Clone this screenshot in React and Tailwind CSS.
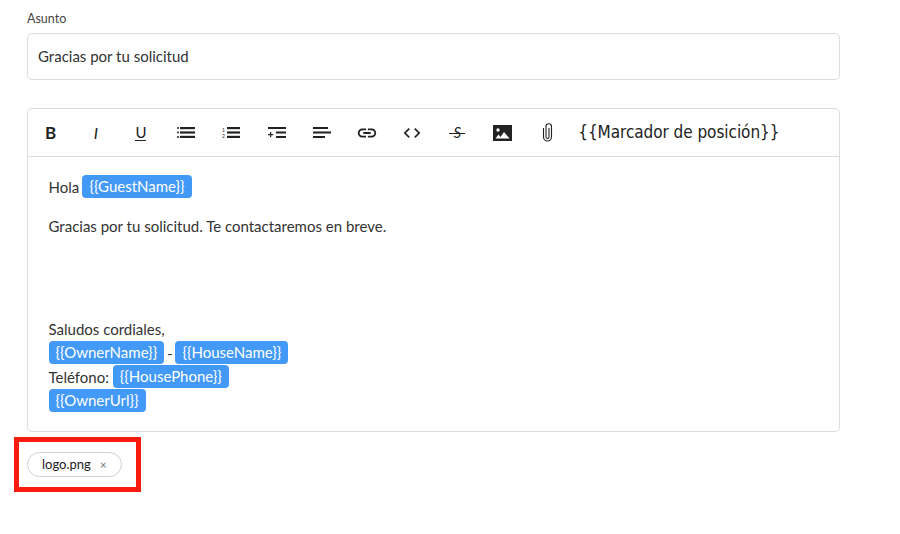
import { MdLink, MdCode } from "react-icons/md";

function Chip({ children }) {
  return (
    <span className="inline-block h-[23px] rounded-[4px] bg-[#4299f7] px-[7px] align-top text-[15px] leading-[23px] text-white">
      {children}
    </span>
  );
}

function Tool({ children }) {
  return <div className="flex w-[45.2px] items-center justify-center text-[#222]">{children}</div>;
}

function Bullets() {
  return (
    <svg width="18" height="11" viewBox="0 0 18 11" fill="#222">
      <rect x="3" y="0" width="15" height="2.200" />
      <rect x="3" y="4.400" width="15" height="2.200" />
      <rect x="3" y="8.800" width="15" height="2.200" />
      <circle cx="1" cy="1.100" r="1" />
      <circle cx="1" cy="5.500" r="1" />
      <circle cx="1" cy="9.900" r="1" />
    </svg>
  );
}

function Numbered() {
  return (
    <svg width="18" height="11" viewBox="0 0 18 11" fill="#222">
      <rect x="5" y="0" width="13" height="2.200" />
      <rect x="5" y="4.400" width="13" height="2.200" />
      <rect x="5" y="8.800" width="13" height="2.200" />
      <text x="0" y="4.500" fontSize="5">1</text>
      <text x="0" y="10.500" fontSize="5">2</text>
    </svg>
  );
}

function Indent() {
  return (
    <svg width="18" height="11" viewBox="0 0 18 11" fill="#222">
      <rect x="0" y="0" width="18" height="2" />
      <rect x="8" y="4.500" width="10" height="2" />
      <rect x="8" y="9" width="10" height="2" />
      <path d="M2 5h1.200v2h2v1.200h-2v2H2v-2H0V7h2z" />
    </svg>
  );
}

function AlignLeft() {
  return (
    <svg width="18" height="11" viewBox="0 0 18 11" fill="#222">
      <rect x="0" y="0" width="15" height="2" />
      <rect x="0" y="4.500" width="18" height="2" />
      <rect x="0" y="9" width="12" height="2" />
    </svg>
  );
}

function Strike() {
  return (
    <div className="relative flex h-[20px] w-[16px] items-center justify-center">
      <span className="text-[15px] italic leading-none">S</span>
      <span className="absolute left-0 top-[10px] h-px w-[16px] bg-[#222]" />
    </div>
  );
}

function Picture() {
  return (
    <svg width="19" height="16" viewBox="0 0 19 16">
      <rect width="19" height="16" fill="#222" />
      <circle cx="5" cy="5" r="1.700" fill="#fff" />
      <path d="M2.500 13.500l3-4 2 2.500 3.500-5 5.500 6.500z" fill="#fff" />
    </svg>
  );
}

function Clip() {
  return (
    <svg width="11" height="19" viewBox="0 0 11 19" fill="none" stroke="#222" strokeWidth="1.100">
      <path d="M7 5v9a1.500 1.500 0 0 1-3 0V3.500a2.500 2.500 0 0 1 5.500 0v10.500a4 4 0 0 1-8 0V5" />
    </svg>
  );
}

export default function App() {
  return (
    <div className="h-[534px] w-[900px] overflow-hidden bg-white pl-[27px] pt-[11px] font-['Lato',sans-serif] text-[#333]">
      <label className="block text-[12.5px] leading-[16px] text-[#444]">Asunto</label>
      <div className="mt-[6px] flex h-[47px] w-[813px] items-center rounded-[5px] border border-[#dcdcdc] px-[10px] text-[15px] text-[#333]">
        Gracias por tu solicitud
      </div>

      <div className="mt-[28px] h-[324px] w-[813px] rounded-[5px] border border-[#dcdcdc]">
        <div className="flex h-[48px] items-stretch border-b border-[#dcdcdc]">
          <Tool><span className="text-[17px] font-bold">B</span></Tool>
          <Tool><span className="text-[16px] italic">I</span></Tool>
          <Tool><span className="border-b border-[#222] text-[15px] leading-[15px]">U</span></Tool>
          <Tool><Bullets /></Tool>
          <Tool><Numbered /></Tool>
          <Tool><Indent /></Tool>
          <Tool><AlignLeft /></Tool>
          <Tool><MdLink size={22} /></Tool>
          <Tool><MdCode size={20} /></Tool>
          <Tool><Strike /></Tool>
          <Tool><Picture /></Tool>
          <Tool><Clip /></Tool>
          <div className="ml-[8px] flex items-center font-['DejaVu_Sans_Condensed','DejaVu_Sans',sans-serif] text-[17px] tracking-[-0.05px] text-[#222] [font-stretch:condensed]">
            {"{{Marcador de posición}}"}
          </div>
        </div>

        <div className="px-[20.5px] pt-[18px] text-[15px] leading-[24px] text-[#333]">
          <p className="[word-spacing:-0.700px]">
            Hola <Chip>{"{{GuestName}}"}</Chip>
          </p>
          <p className="mt-[15px]">Gracias por tu solicitud. Te contactaremos en breve.</p>
          <p className="mt-[79px]">Saludos cordiales,</p>
          <p className="[word-spacing:-1px]">
            <Chip>{"{{OwnerName}}"}</Chip> - <Chip>{"{{HouseName}}"}</Chip>
          </p>
          <p>
            Teléfono: <Chip>{"{{HousePhone}}"}</Chip>
          </p>
          <p>
            <Chip>{"{{OwnerUrl}}"}</Chip>
          </p>
        </div>
      </div>

      <div className="-ml-[13px] mt-[5px] flex h-[55px] w-[127px] items-center border-[5px] border-[#fb1a0e] pl-[8px]">
        <div className="flex h-[25px] w-[95px] items-center rounded-full border border-[#cfcfcf] pl-[14px] text-[13px] text-[#222]">
          logo.png
          <span className="ml-[9px] text-[12px] text-[#777]">×</span>
        </div>
      </div>
    </div>
  );
}
